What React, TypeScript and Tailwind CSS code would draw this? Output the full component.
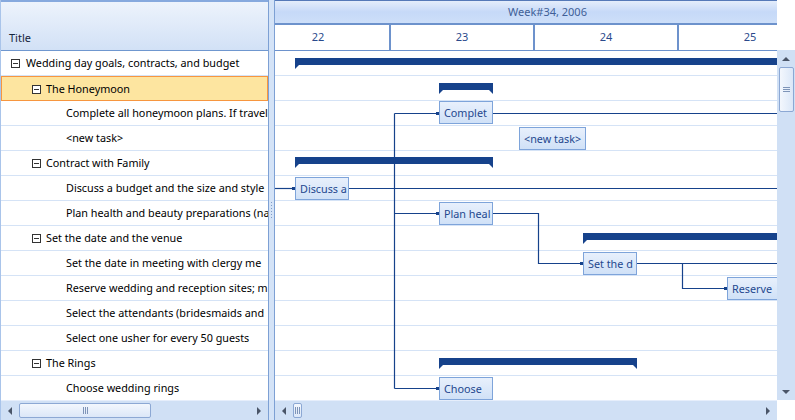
import React from "react";

type Row = { level: number; group?: boolean; selected?: boolean; text: string };

const rows: Row[] = [
    { level: 0, group: true, text: "Wedding day goals, contracts, and budget" },
    { level: 1, group: true, selected: true, text: "The Honeymoon" },
    { level: 2, text: "Complete all honeymoon plans. If travel" },
    { level: 2, text: "<new task>" },
    { level: 1, group: true, text: "Contract with Family" },
    { level: 2, text: "Discuss a budget and the size and style" },
    { level: 2, text: "Plan health and beauty preparations (na" },
    { level: 1, group: true, text: "Set the date and the venue" },
    { level: 2, text: "Set the date in meeting with clergy me" },
    { level: 2, text: "Reserve wedding and reception sites; m" },
    { level: 2, text: "Select the attendants (bridesmaids and" },
    { level: 2, text: "Select one usher for every 50 guests" },
    { level: 1, group: true, text: "The Rings" },
    { level: 2, text: "Choose wedding rings" },
];

const indent = ["pl-[10px]", "pl-[31px]", "pl-[65px]"];

// gantt boxes, in chart coords
const tasks = [
    { x: 164, y: 50, w: 54, t: "Complet" },
    { x: 244, y: 76, w: 67, t: "<new task>" },
    { x: 20, y: 126, w: 54, t: "Discuss a" },
    { x: 164, y: 151, w: 54, t: "Plan heal" },
    { x: 308, y: 201, w: 54, t: "Set the d" },
    { x: 452, y: 226, w: 70, t: "Reserve" },
    { x: 164, y: 326, w: 54, t: "Choose" },
];

const summaries = [
    { x0: 20, x1: 560, t: 7 },
    { x0: 164, x1: 218, t: 32 },
    { x0: 20, x1: 218, t: 106 },
    { x0: 308, x1: 560, t: 182 },
    { x0: 164, x1: 362, t: 307 },
];

function Minus() {
    return (
        <span className="w-[9px] h-[9px] shrink-0 border border-[#333] bg-white flex items-center justify-center">
            <span className="w-[5px] h-px bg-[#333]" />
        </span>
    );
}

function Arrow({ dir }: { dir: "l" | "r" | "u" | "d" }) {
    const pts = {
        l: "5,0 5,8 1,4",
        r: "1,0 1,8 5,4",
        u: "0,5 8,5 4,1",
        d: "0,1 8,1 4,5",
    }[dir];
    const horiz = dir === "l" || dir === "r";
    return (
        <svg width={horiz ? 6 : 8} height={horiz ? 8 : 6} viewBox={horiz ? "0 0 6 8" : "0 0 8 6"}>
            <polygon points={pts} fill="#4a5568" />
        </svg>
    );
}

function HScroll({ thumb }: { thumb: string }) {
    return (
        <div className="h-[20px] shrink-0 bg-[#d0e0f5] border-t border-[#e6eefb] flex items-center">
            <div className="w-[18px] flex justify-center">
                <Arrow dir="l" />
            </div>
            <div className={`${thumb} h-[15px] rounded-[2px] border border-[#8ca8d4] bg-gradient-to-b from-[#f3f7fd] to-[#dbe7f8] flex items-center justify-center gap-[1px]`}>
                <span className="w-px h-[7px] bg-[#7e94b8]" />
                <span className="w-px h-[7px] bg-[#7e94b8]" />
                <span className="w-px h-[7px] bg-[#7e94b8]" />
            </div>
            <div className="flex-1" />
            <div className="w-[18px] flex justify-center">
                <Arrow dir="r" />
            </div>
        </div>
    );
}

export default function App() {
    return (
        <div className="w-[795px] h-[420px] flex bg-white overflow-hidden font-['Noto_Sans',sans-serif] text-[11px]">
            {/* tree list */}
            <div className="w-[268px] shrink-0 flex flex-col border-l border-[#a9c4ea]">
                <div className="h-[51px] shrink-0 border-t-2 border-t-[#86a9de] border-b border-b-[#6f97cf] bg-gradient-to-b from-[#edf3fc] to-[#d2e1f6] flex items-end pb-[4px] pl-[8px] text-[#15243c]">
                    Title
                </div>
                <div className="flex-1 overflow-hidden text-[10.8px]">
                    {rows.map((r, i) => (
                        <div
                            key={i}
                            className={`h-[25px] flex items-center gap-[5px] pt-px whitespace-nowrap overflow-hidden text-black ${r.selected ? "pl-[30px] bg-[#fde5a0] border border-[#f7963f]" : `${indent[r.level]} border-b border-[#d5e3f6]`}`}
                        >
                            {r.group && <Minus />}
                            <span className={r.level === 0 ? "ml-px" : ""}>{r.text}</span>
                        </div>
                    ))}
                </div>
                <HScroll thumb="w-[132px]" />
            </div>

            {/* splitter */}
            <div className="w-[7px] shrink-0 border-x border-[#7da0d4] bg-[#d4e3f7] flex flex-col items-center justify-center gap-[2px]">
                {[0, 1, 2, 3, 4, 5].map((d) => (
                    <span key={d} className="w-px h-px bg-[#7f9bc7]" />
                ))}
            </div>

            {/* gantt */}
            <div className="w-[502px] shrink-0 flex flex-col">
                <div className="h-[25px] shrink-0 border-t border-[#5579b8] border-b-2 border-b-[#6d92cc] bg-gradient-to-b from-[#e4edfb] via-[#c6d9f8] to-[#cddff9] flex items-center pl-[233px] text-[#3f5f97]">
                    Week#34, 2006
                </div>
                <div className="h-[26px] shrink-0 border-b border-[#6d92cc] overflow-hidden">
                    <div className="flex h-full -ml-[28px] text-[#2a4a8c]">
                        {["22", "23", "24", "25"].map((d) => (
                            <div key={d} className="w-[144px] shrink-0 h-full border-r-2 border-[#6d92cc] flex items-center justify-center">
                                {d}
                            </div>
                        ))}
                    </div>
                </div>
                <div className="flex-1 relative overflow-hidden">
                    {rows.map((_, i) => (
                        <div key={i} className="h-[25px] border-b border-[#d5e3f6]" />
                    ))}
                    <svg className="absolute inset-0" width="502" height="349">
                        {summaries.map((s, i) => (
                            <polygon
                                key={i}
                                points={`${s.x0},${s.t} ${s.x1},${s.t} ${s.x1},${s.t + 11} ${s.x1 - 4},${s.t + 7} ${s.x0 + 4},${s.t + 7} ${s.x0},${s.t + 11}`}
                                fill="#16428b"
                            />
                        ))}
                        <g stroke="#16428b" strokeWidth="1.2" fill="none">
                            <path d="M119.5 62.5 V337.5" />
                            <path d="M119.5 62.5 H162" />
                            <path d="M119.5 162.5 H162" />
                            <path d="M119.5 337.5 H162" />
                            <path d="M218 62.5 H502" />
                            <path d="M0 137.5 H18" />
                            <path d="M74 137.5 H502" />
                            <path d="M218 162.5 H263.5 V212.5 H306" />
                            <path d="M362 212.5 H502" />
                            <path d="M407.5 212.5 V237.5 H450" />
                        </g>
                        <g fill="#16428b">
                            <rect x="161" y="61" width="3" height="3" />
                            <rect x="161" y="161" width="3" height="3" />
                            <rect x="161" y="336" width="3" height="3" />
                            <rect x="17" y="136" width="3" height="3" />
                            <rect x="305" y="211" width="3" height="3" />
                            <rect x="449" y="236" width="3" height="3" />
                        </g>
                    </svg>
                    {tasks.map((t, i) => (
                        <div
                            key={i}
                            className="absolute h-[23px] border border-[#7ea4da] bg-gradient-to-b from-[#e8f0fc] to-[#d0e1f7] flex items-center pl-[4px] pt-px whitespace-nowrap overflow-hidden text-[#24488f] text-[10.8px]"
                            style={{ left: t.x, top: t.y, width: t.w }}
                        >
                            {t.t}
                        </div>
                    ))}
                </div>
                <HScroll thumb="w-[9px]" />
            </div>

            {/* vertical scrollbar */}
            <div className="w-[18px] shrink-0 flex flex-col">
                <div className="h-[50px] shrink-0 bg-white" />
                <div className="h-[350px] shrink-0 bg-[#d0e0f5] flex flex-col items-center">
                    <div className="h-[17px] flex items-center">
                        <Arrow dir="u" />
                    </div>
                    <div className="w-[15px] h-[45px] rounded-[2px] border border-[#8ca8d4] bg-gradient-to-r from-[#f3f7fd] to-[#dbe7f8] flex flex-col items-center justify-center gap-[1px]">
                        <span className="w-[7px] h-px bg-[#7e94b8]" />
                        <span className="w-[7px] h-px bg-[#7e94b8]" />
                        <span className="w-[7px] h-px bg-[#7e94b8]" />
                    </div>
                    <div className="flex-1" />
                    <div className="h-[17px] flex items-center">
                        <Arrow dir="d" />
                    </div>
                </div>
                <div className="h-[20px] shrink-0 bg-white" />
            </div>
        </div>
    );
}
